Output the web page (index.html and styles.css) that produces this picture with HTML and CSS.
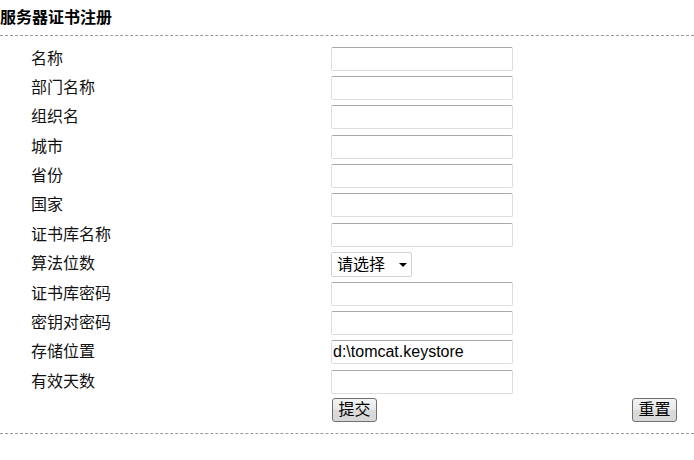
FILE: index.html
```html
<!DOCTYPE html>
<html lang="zh">
<head>
<meta charset="utf-8">
<title>服务器证书注册</title>
<link rel="stylesheet" href="styles.css">
</head>
<body>
<div class="title">服务器证书注册</div>
<form class="form">
  <div class="row"><span class="label">名称</span><span class="field"><input class="input" type="text"></span></div>
  <div class="row"><span class="label">部门名称</span><span class="field"><input class="input" type="text"></span></div>
  <div class="row"><span class="label">组织名</span><span class="field"><input class="input" type="text"></span></div>
  <div class="row"><span class="label">城市</span><span class="field"><input class="input" type="text"></span></div>
  <div class="row"><span class="label">省份</span><span class="field"><input class="input" type="text"></span></div>
  <div class="row"><span class="label">国家</span><span class="field"><input class="input" type="text"></span></div>
  <div class="row"><span class="label">证书库名称</span><span class="field"><input class="input" type="text"></span></div>
  <div class="row"><span class="label">算法位数</span><span class="field"><span class="select-wrap"><select class="select"><option>请选择</option><option>1024</option><option>2048</option></select><span class="arrow"></span></span></span></div>
  <div class="row"><span class="label">证书库密码</span><span class="field"><input class="input" type="password"></span></div>
  <div class="row"><span class="label">密钥对密码</span><span class="field"><input class="input" type="password"></span></div>
  <div class="row"><span class="label">存储位置</span><span class="field"><input class="input" type="text" value="d:\tomcat.keystore"></span></div>
  <div class="row"><span class="label">有效天数</span><span class="field"><input class="input" type="text"></span></div>
  <div class="row buttons"><span class="label"></span><span class="field actions"><button class="btn" type="button">提交</button><button class="btn" type="reset">重置</button></span></div>
</form>
</body>
</html>
```
FILE: styles.css
```css
html, body {
  margin: 0;
  padding: 0;
  background: #fff;
}
body {
  font-family: "Liberation Sans", "Noto Sans CJK SC", sans-serif;
  font-size: 16px;
  color: #000;
}
.title {
  font-weight: bold;
  font-size: 16px;
  line-height: 20px;
  padding: 8px 0 7px 0;
  border-bottom: 1px dashed #999;
}
.form {
  padding: 8px 17px 7px 31px;
  border-bottom: 1px dashed #999;
}
.row {
  display: grid;
  grid-template-columns: 300px 1fr;
  align-items: center;
  height: 29.36px;
}
.label {
  line-height: 20px;
  color: #111;
}
.field {
  display: flex;
  align-items: center;
}
.input {
  box-sizing: border-box;
  width: 182px;
  height: 24px;
  margin: 0;
  padding: 0 2px 0 1px;
  border: 1px solid #dcdde2;
  border-top-color: #a8a8a8;
  border-radius: 2px;
  font-family: "Liberation Sans", "Noto Sans CJK SC", sans-serif;
  font-size: 16px;
  color: #000;
  background: #fff;
  outline: none;
}
.select-wrap {
  position: relative;
  display: inline-block;
}
.select {
  appearance: none;
  -webkit-appearance: none;
  box-sizing: border-box;
  width: 81px;
  height: 25px;
  margin: 0;
  padding: 0 0 0 5px;
  border: 1px solid #d0d2d8;
  border-radius: 2px;
  background: #fff;
  font-family: "Liberation Sans", "Noto Sans CJK SC", sans-serif;
  font-size: 16px;
  color: #000;
  outline: none;
}
.arrow {
  position: absolute;
  left: 68px;
  top: 11px;
  width: 0;
  height: 0;
  border-left: 4px solid transparent;
  border-right: 4px solid transparent;
  border-top: 4px solid #000;
  pointer-events: none;
}
.buttons {
  align-items: start;
}
.actions {
  justify-content: space-between;
  padding-top: 2px;
}
.btn {
  box-sizing: border-box;
  height: 24px;
  width: 45px;
  margin: 0 0 0 1px;
  padding: 0;
  border: 1px solid #707070;
  border-radius: 3px;
  background: linear-gradient(#f4f4f4, #e8e8e8 50%, #dadada 51%, #d8d8d8);
  font-family: "Liberation Sans", "Noto Sans CJK SC", sans-serif;
  font-size: 16px;
  line-height: 20px;
  color: #000;
}
```
